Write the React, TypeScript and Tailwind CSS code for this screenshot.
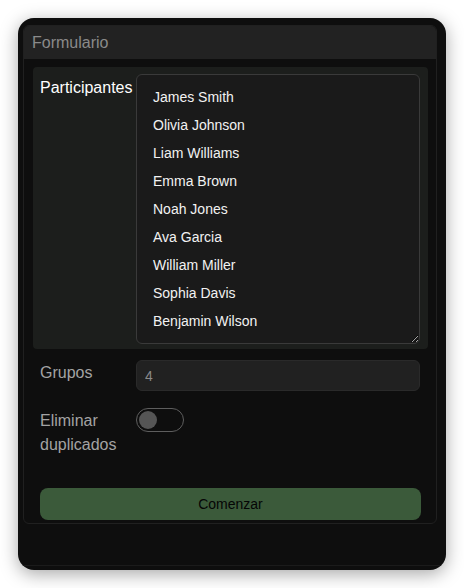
import { useState } from "react";

const names = [
  "James Smith",
  "Olivia Johnson",
  "Liam Williams",
  "Emma Brown",
  "Noah Jones",
  "Ava Garcia",
  "William Miller",
  "Sophia Davis",
  "Benjamin Wilson",
];

export default function App() {
  const [dedupe, setDedupe] = useState(false);

  return (
    <div className="min-h-screen bg-white p-[18px] font-['Liberation_Sans',Arial,sans-serif]">
      {/* Window */}
      <div className="w-[428px] h-[552px] rounded-[16px] bg-[#0e0e0e] shadow-[0_4px_18px_rgba(0,0,0,0.35)] overflow-hidden flex flex-col">
        <div className="pt-[7px] pl-[5px] pr-[9px]">
          {/* Card */}
          <div className="border border-[#202020] rounded-[6px] pb-[3px]">
            <div className="h-[33px] bg-[#222222] rounded-t-[5px] px-[8px] flex items-center text-[16px] text-[#8a8a8a]">
              Formulario
            </div>

            <div className="pl-[9px] pr-[8px] pt-[8px]">
              {/* Participantes */}
              <div className="flex rounded-[4px] bg-[#1c1e1c] pt-[7px] pb-[5px] pl-[7px] pr-[8px]">
                <label className="w-[96px] shrink-0 pt-[2px] text-[16px] leading-[24px] text-white">
                  Participantes
                </label>
                <textarea
                  defaultValue={names.join("\n")}
                  className="w-[284px] h-[270px] resize-y overflow-hidden [color-scheme:dark] rounded-[6px] border border-[#3a3a3a] bg-[#1a1a1a] px-[16px] py-[8px] text-[14px] leading-[28px] text-[#f2f2f2] outline-none"
                />
              </div>

              {/* Grupos */}
              <div className="flex mt-[11px] px-[7px]">
                <label className="w-[96px] shrink-0 pt-[1px] text-[16px] leading-[24px] text-[#a3a3a3]">
                  Grupos
                </label>
                <input
                  defaultValue="4"
                  className="w-[284px] h-[31px] rounded-[6px] border border-[#2a2a2a] bg-[#212121] px-[8px] text-[14px] text-[#8a8a8a] outline-none"
                />
              </div>

              {/* Eliminar duplicados */}
              <div className="flex mt-[17px] px-[7px]">
                <label className="w-[96px] shrink-0 pt-[1px] text-[16px] leading-[24px] text-[#a3a3a3]">
                  Eliminar
                  <br />
                  duplicados
                </label>
                <button
                  type="button"
                  onClick={() => setDedupe((v) => !v)}
                  className="relative w-[48px] h-[24px] rounded-full border border-[#5e5e5e] bg-[#0e0e0e]"
                >
                  <span
                    className={`absolute top-[2px] w-[18px] h-[18px] rounded-full ${
                      dedupe ? "left-[26px] bg-[#4a7a48]" : "left-[2px] bg-[#555555]"
                    }`}
                  />
                </button>
              </div>

              {/* Submit */}
              <div className="px-[7px] mt-[31px]">
                <button
                  type="button"
                  className="w-full h-[32px] rounded-[8px] bg-[#3b5a3a] text-[14px] font-medium text-[#050505]"
                >
                  Comenzar
                </button>
              </div>
            </div>
          </div>
        </div>

        <div className="flex-1" />
        <div className="h-[5px] border-t border-[#1b1b1b]" />
      </div>
    </div>
  );
}
